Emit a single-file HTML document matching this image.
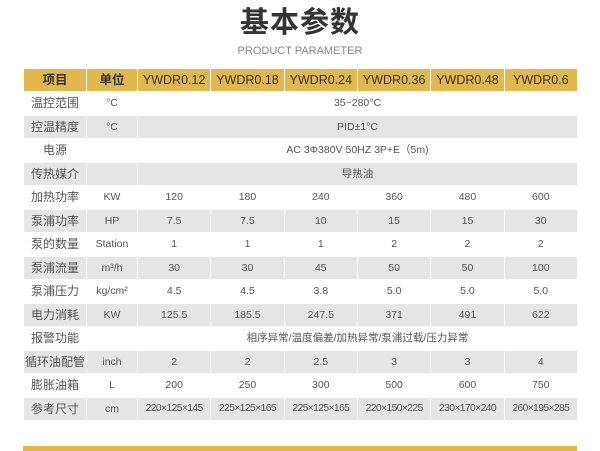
<!DOCTYPE html>
<html><head><meta charset="utf-8"><style>
body{margin:0;width:600px;height:451px;background:#fff;position:relative;overflow:hidden;font-family:"Liberation Sans","Noto Sans CJK SC",sans-serif;color:#555}
.t{position:absolute;top:2px;left:0;width:600px;text-align:center;font-size:29px;line-height:42px;font-weight:bold;color:#333;letter-spacing:1px}
.s{position:absolute;top:44px;left:0;width:600px;text-align:center;font-size:11px;line-height:14px;color:#888}
table{position:absolute;left:23px;top:68px;width:555px;border-collapse:separate;border-spacing:1px;table-layout:fixed}
td{height:22.5px;line-height:14px;padding:0;text-align:center;vertical-align:middle;font-size:10.5px;white-space:nowrap;overflow:hidden}
td:first-child{font-size:12px}
tr.h td{background:#e2b84c;color:#333;font-size:12.5px;height:22px}
tr.h td:nth-child(-n+2){font-weight:bold}
tr.g td{background:#e5e5e5}
td.d{font-size:10.3px;letter-spacing:-0.6px}
.b{position:absolute;left:23px;top:446px;width:554px;height:5px;background:#e2b84c}
</style></head><body>
<div class="t">基本参数</div>
<div class="s">PRODUCT PARAMETER</div>
<table>
<colgroup><col style="width:62px"><col style="width:50px"><col><col><col><col><col><col></colgroup>
<tr class="h"><td>项目</td><td>单位</td><td>YWDR0.12</td><td>YWDR0.18</td><td>YWDR0.24</td><td>YWDR0.36</td><td>YWDR0.48</td><td>YWDR0.6</td></tr>
<tr><td>温控范围</td><td>°C</td><td colspan="6">35~280°C</td></tr>
<tr class="g"><td>控温精度</td><td>°C</td><td colspan="6">PID±1°C</td></tr>
<tr><td>电源</td><td></td><td colspan="6">AC 3Φ380V 50HZ 3P+E（5m)</td></tr>
<tr class="g"><td>传热媒介</td><td></td><td colspan="6">导热油</td></tr>
<tr><td>加热功率</td><td>KW</td><td>120</td><td>180</td><td>240</td><td>360</td><td>480</td><td>600</td></tr>
<tr class="g"><td>泵浦功率</td><td>HP</td><td>7.5</td><td>7.5</td><td>10</td><td>15</td><td>15</td><td>30</td></tr>
<tr><td>泵的数量</td><td>Station</td><td>1</td><td>1</td><td>1</td><td>2</td><td>2</td><td>2</td></tr>
<tr class="g"><td>泵浦流量</td><td>m³/h</td><td>30</td><td>30</td><td>45</td><td>50</td><td>50</td><td>100</td></tr>
<tr><td>泵浦压力</td><td>kg/cm²</td><td>4.5</td><td>4.5</td><td>3.8</td><td>5.0</td><td>5.0</td><td>5.0</td></tr>
<tr class="g"><td>电力消耗</td><td>KW</td><td>125.5</td><td>185.5</td><td>247.5</td><td>371</td><td>491</td><td>622</td></tr>
<tr><td>报警功能</td><td></td><td colspan="6">相序异常/温度偏差/加热异常/泵浦过载/压力异常</td></tr>
<tr class="g"><td>循环油配管</td><td>inch</td><td>2</td><td>2</td><td>2.5</td><td>3</td><td>3</td><td>4</td></tr>
<tr><td>膨胀油箱</td><td>L</td><td>200</td><td>250</td><td>300</td><td>500</td><td>600</td><td>750</td></tr>
<tr class="g"><td>参考尺寸</td><td>cm</td><td class="d">220×125×145</td><td class="d">225×125×165</td><td class="d">225×125×165</td><td class="d">220×150×225</td><td class="d">230×170×240</td><td class="d">260×195×285</td></tr>
</table>
<div class="b"></div>
</body></html>
